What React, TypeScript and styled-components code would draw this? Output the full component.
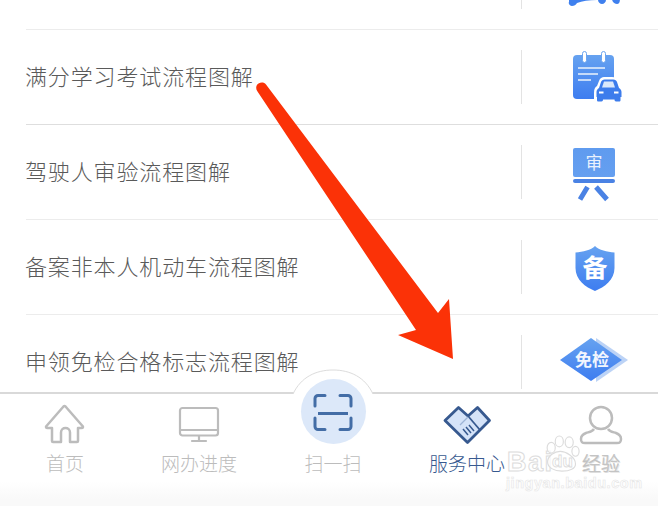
import React from "react";
import styled, { createGlobalStyle } from "styled-components";

const Global = createGlobalStyle`
  html, body { margin: 0; padding: 0; background: #fff; }
  * { box-sizing: border-box; }
`;

const FONT = `"Noto Sans CJK SC", "Noto Sans", sans-serif`;

const Page = styled.div`
  position: relative;
  width: 658px;
  height: 506px;
  overflow: hidden;
  display: flex;
  flex-direction: column;
  background: #fff;
  font-family: ${FONT};
`;

const List = styled.div`
  flex: 0 0 392px;
  overflow: hidden;
`;

const ListInner = styled.div`
  margin-top: -65px;
  padding-left: 26px;
`;

const Row = styled.div<{ $strong?: boolean }>`
  height: 95px;
  display: flex;
  align-items: center;
  border-bottom: 1px solid ${(p) => (p.$strong ? "#dedede" : "#ececec")};
`;

const RowTitle = styled.span`
  flex: 1;
  margin-left: -1px;
  padding-bottom: 4px;
  font-size: 22px;
  font-weight: 300;
  letter-spacing: 0.87px;
  color: #5a5a5a;
  white-space: nowrap;
`;

const IconCell = styled.div`
  flex: 0 0 137px;
  height: 54px;
  border-left: 1px solid #e3e3e3;
  padding-left: 10px;
  display: flex;
  align-items: center;
  justify-content: center;
`;

const RowIcon = styled.svg`
  flex: none;
  width: 74px;
  height: 60px;
  overflow: visible;
`;

const TabBar = styled.nav`
  position: relative;
  flex: 1;
  display: grid;
  grid-template-columns: repeat(5, 134px);
  justify-content: center;
  padding-left: 8px;
  border-top: 2px solid #d9d9d9;
  background: linear-gradient(#fff 0, #fff 78%, #f9f9f9 94%, #f9f9f9 100%);
`;

const Hump = styled.svg`
  position: absolute;
  left: 291px;
  top: -26px;
  width: 84px;
  height: 27px;
`;

const Tab = styled.div`
  position: relative;
  display: flex;
  flex-direction: column;
  align-items: center;
  padding-top: 10px;
`;

const TabIcon = styled.svg`
  width: 44px;
  height: 40px;
  overflow: visible;
`;

const ScanCircle = styled.div`
  position: relative;
  z-index: 1;
  width: 65px;
  height: 65px;
  margin-top: -25px;
  border-radius: 50%;
  background: #dce8f9;
  display: flex;
  align-items: center;
  justify-content: center;
`;

const ScanGlyph = styled.svg`
  width: 40px;
  height: 39px;
  margin-top: 2px;
`;

const TabLabel = styled.span<{ $active?: boolean; $marked?: boolean }>`
  margin-top: 6px;
  font-size: 19px;
  line-height: 26px;
  font-weight: 300;
  white-space: nowrap;
  color: ${(p) => (p.$active ? "#37598f" : "#bcbcbc")};
  ${(p) => (p.$marked ? "-webkit-text-stroke: 0.5px #c4c4c4; text-shadow: 1px 1px 0 #e6e6e6;" : "")}
`;

const Arrow = styled.svg`
  position: absolute;
  left: 0;
  top: 0;
  width: 658px;
  height: 506px;
  pointer-events: none;
`;

const Watermark = styled.div`
  position: absolute;
  left: 505px;
  top: 437px;
  width: 120px;
  height: 56px;
  pointer-events: none;
`;

const MarkBai = styled.span`
  position: absolute;
  left: 2px;
  top: 9px;
  font-family: "Liberation Sans", sans-serif;
  font-size: 27px;
  line-height: 32px;
  font-weight: 700;
  letter-spacing: 1.5px;
  color: rgba(255, 255, 255, 0.9);
  -webkit-text-stroke: 1px #dcdcdc;
`;

const MarkPaw = styled.svg`
  position: absolute;
  left: 39px;
  top: -2px;
  width: 36px;
  height: 38px;
`;

const MarkDu = styled.span`
  position: absolute;
  left: 47px;
  top: 14px;
  font-family: "Liberation Sans", sans-serif;
  font-size: 17px;
  line-height: 22px;
  font-weight: 700;
  color: rgba(255, 255, 255, 0.9);
  -webkit-text-stroke: 0.8px #dcdcdc;
`;

const MarkUrl = styled.span`
  position: absolute;
  left: 1px;
  top: 37px;
  font-family: "Liberation Sans", sans-serif;
  font-size: 14.5px;
  line-height: 18px;
  font-weight: 700;
  letter-spacing: 0.55px;
  white-space: nowrap;
  color: rgba(255, 255, 255, 0.9);
  -webkit-text-stroke: 0.6px #e6e6e6;
`;

const Grad = () => (
  <defs>
    <linearGradient id="blue" x1="0" y1="0" x2="0" y2="1">
      <stop offset="0" stopColor="#66a2f0" />
      <stop offset="1" stopColor="#3e7df0" />
    </linearGradient>
  </defs>
);

const CarStub = () => (
  <RowIcon viewBox="0 0 74 60">
    <g fill="#3f80ee">
      <path d="M11 47h28v1c-8 0-15 1-20 3-1 2-3 3-5 3s-4-2-3-4z" />
      <path d="M40 47h8v1c0 2-2 4-4 4s-4-2-4-4z" />
      <path d="M54 47h8c0 3-1 5-3 5s-5-2-5-5z" />
    </g>
  </RowIcon>
);

const CalendarCar = () => (
  <RowIcon viewBox="0 0 74 60">
    <Grad />
    <rect x="15" y="8" width="41" height="44" rx="4" fill="url(#blue)" />
    <rect x="24.5" y="4.5" width="4" height="11" rx="2" fill="#fff" stroke="#6aa4f0" strokeWidth="1" />
    <rect x="43.5" y="4.5" width="4" height="11" rx="2" fill="#fff" stroke="#6aa4f0" strokeWidth="1" />
    <g stroke="#e3eefc" strokeWidth="1.6">
      <path d="M20 21h27" />
      <path d="M20 27h20" />
      <path d="M20 33h13" />
    </g>
    <path
      d="M36 46c0-4 1-6 3-7l2-5c1-3 3-4 5-4h8c3 0 5 1 6 4l2 5c2 1 3 3 3 7v8c0 1-1 2-2 2H38c-1 0-2-1-2-2z"
      fill="#fff"
    />
    <path
      d="M38.500 45c0-2 1-3 2.500-4l2-6c.5-1.500 2-2.500 3.500-2.500h9c1.500 0 3 1 3.500 2.500l2 6c1.500 1 2.500 2 2.500 4v5h-1v3c0 1-.5 1.500-1.500 1.500h-3c-1 0-1.500-1-1.500-2H45c0 1-.5 2-1.500 2h-3c-1 0-1.500-.5-1.500-1.500v-3h-.5z"
      fill="#3d7cec"
    />
    <path d="M44 40.500l2-6h9l2 6z" fill="#dbe8fb" />
    <path d="M41 44.500h4.500v2H41zM56 44.500h4.500v2H56z" fill="#fff" />
  </RowIcon>
);

const Exam = () => (
  <RowIcon viewBox="0 0 74 60">
    <defs>
      <linearGradient id="examBlue" x1="0" y1="0" x2="0" y2="1">
        <stop offset="0" stopColor="#5f9bef" />
        <stop offset="1" stopColor="#659ff0" />
      </linearGradient>
    </defs>
    <rect x="15" y="6" width="42" height="29" rx="2" fill="url(#examBlue)" />
    <rect x="15" y="37" width="42" height="4" rx="2" fill="#4a82e4" />
    <path d="M29.500 45L22 57.500M38 45l11 12.500" stroke="#4a82e4" strokeWidth="5" />
    <text x="36" y="27" textAnchor="middle" fontSize="17" fontFamily={FONT} fill="#eaf2fd">审</text>
  </RowIcon>
);

const Shield = () => (
  <RowIcon viewBox="0 0 74 60">
    <Grad />
    <path d="M37 9c4 4 12 6 19.500 6.500V31c0 12-10 19-19.500 23C27.500 50 17.500 43 17.500 31V15.500C25 15 33 13 37 9z" fill="url(#blue)" />
    <text x="37" y="40" textAnchor="middle" fontSize="25" fontWeight="700" fontFamily={FONT} fill="#fff">备</text>
  </RowIcon>
);

const Diamond = () => (
  <RowIcon viewBox="0 0 74 60">
    <Grad />
    <path d="M38 6l32 22-32 22z" fill="#bcd3f6" />
    <path d="M33 6l31 22-31 21L2 28z" fill="url(#blue)" />
    <text x="34" y="34" textAnchor="middle" fontSize="17" fontWeight="700" fontFamily={FONT} fill="#f2f6fe">免检</text>
  </RowIcon>
);

const HomeIcon = () => (
  <TabIcon viewBox="0 0 44 40" fill="none" stroke="#bcbcbc" strokeWidth="2.500" strokeLinecap="round" strokeLinejoin="round">
    <path d="M9 24H4.500c-1.500 0-2-1-1-2L20.500 2.500c.6-.6 1.400-.6 2 0L39.500 22c1 1 .5 2-1 2H35v13c0 .7-.4 1-1 1h-7V28.500c0-6-9-6-9 0V38h-8c-.5 0-1-.5-1-1z" />
  </TabIcon>
);

const MonitorIcon = () => (
  <TabIcon viewBox="0 0 44 40" fill="none" stroke="#bcbcbc" strokeWidth="2.200" strokeLinecap="round" strokeLinejoin="round">
    <rect x="3" y="4" width="38" height="27.500" rx="2.500" />
    <path d="M3 26h38" />
    <path d="M22 32v5M15 37h14" />
  </TabIcon>
);

const ScanIcon = () => (
  <ScanGlyph viewBox="0 0 40 39" fill="none" stroke="#436da6" strokeWidth="3" strokeLinecap="round" strokeLinejoin="round">
    <path d="M12 2.500H5a3 3 0 0 0-3 3V13" />
    <path d="M27 2.500h8a3 3 0 0 1 3 3V13" />
    <path d="M12 36.500H5a3 3 0 0 1-3-3V25" />
    <path d="M27 36.500h8a3 3 0 0 0 3-3V25" />
    <path d="M5 20.500h30" strokeLinecap="butt" />
  </ScanGlyph>
);

const HeartIcon = () => (
  <TabIcon viewBox="0 0 44 40" fill="none" strokeLinejoin="round">
    <path
      d="M0 16.500L13.500 3.500 23 12l9.500-8.500L44.500 16.500 22.500 38.500z"
      fill="#d5e3f8"
      stroke="#37598f"
      strokeWidth="2.800"
    />
    <path d="M23 12l12 14" stroke="#37598f" strokeWidth="1.800" />
    <path d="M23 13l-8 8" stroke="#9db4d6" strokeWidth="1.200" />
    <path d="M18 25l5 6M21 23l5 6M24 21l5 6" stroke="#37598f" strokeWidth="1.500" />
  </TabIcon>
);

const UserIcon = () => (
  <TabIcon viewBox="0 0 44 40" fill="none" stroke="#bcbcbc" strokeWidth="2.500">
    <circle cx="22" cy="14" r="11" />
    <path d="M15 25c-2 3-5 3-8 4-4 1.500-5 4-5 6 0 3 1 4 4 4h32c3 0 4-1 4-4 0-2-1-4.500-5-6-3-1-6-1-8-4" strokeLinejoin="round" />
  </TabIcon>
);

const rows: { title: string; icon: React.ReactNode }[] = [
  { title: "", icon: <CarStub /> },
  { title: "满分学习考试流程图解", icon: <CalendarCar /> },
  { title: "驾驶人审验流程图解", icon: <Exam /> },
  { title: "备案非本人机动车流程图解", icon: <Shield /> },
  { title: "申领免检合格标志流程图解", icon: <Diamond /> },
];

export default function App() {
  return (
    <Page>
      <Global />
      <List>
        <ListInner>
          {rows.map((r, i) => (
            <Row key={i} $strong={i === 1}>
              <RowTitle>{r.title}</RowTitle>
              <IconCell>{r.icon}</IconCell>
            </Row>
          ))}
        </ListInner>
      </List>
      <TabBar>
        <Hump viewBox="0 0 84 27">
          <path d="M2 26C10 9 25 2 42 2s32 7 40 24z" fill="#fff" />
          <path d="M2 26C10 9 25 2 42 2s32 7 40 24" fill="none" stroke="#dcdcdc" strokeWidth="1" />
        </Hump>
        <Tab>
          <HomeIcon />
          <TabLabel>首页</TabLabel>
        </Tab>
        <Tab>
          <MonitorIcon />
          <TabLabel>网办进度</TabLabel>
        </Tab>
        <Tab>
          <ScanCircle>
            <ScanIcon />
          </ScanCircle>
          <TabLabel>扫一扫</TabLabel>
        </Tab>
        <Tab>
          <HeartIcon />
          <TabLabel $active>服务中心</TabLabel>
        </Tab>
        <Tab>
          <UserIcon />
          <TabLabel $marked>经验</TabLabel>
        </Tab>
      </TabBar>
      <Arrow viewBox="0 0 658 506">
        <path
          d="M257.500 91.500c-2.200-3-1.500-6.500 1-8s5.500-1.500 7.500 1L438 313l11-14 4 60-55-24 18-5z"
          fill="#fb3207"
        />
      </Arrow>
      <Watermark>
        <MarkBai>Bai</MarkBai>
        <MarkPaw viewBox="0 0 40 42" fill="rgba(255,255,255,.7)" stroke="#dcdcdc" strokeWidth="1.300">
          <ellipse cx="8" cy="14" rx="4.500" ry="6" />
          <ellipse cx="17" cy="7" rx="4.500" ry="6" />
          <ellipse cx="28" cy="8" rx="4.500" ry="6" />
          <ellipse cx="35" cy="18" rx="4" ry="5.500" />
          <path d="M4 30c0-7 8-12 14-12s17 6 17 14c0 5-6 8-15 8S4 36 4 30z" />
        </MarkPaw>
        <MarkDu>du</MarkDu>
        <MarkUrl>jingyan.baidu.com</MarkUrl>
      </Watermark>
    </Page>
  );
}
